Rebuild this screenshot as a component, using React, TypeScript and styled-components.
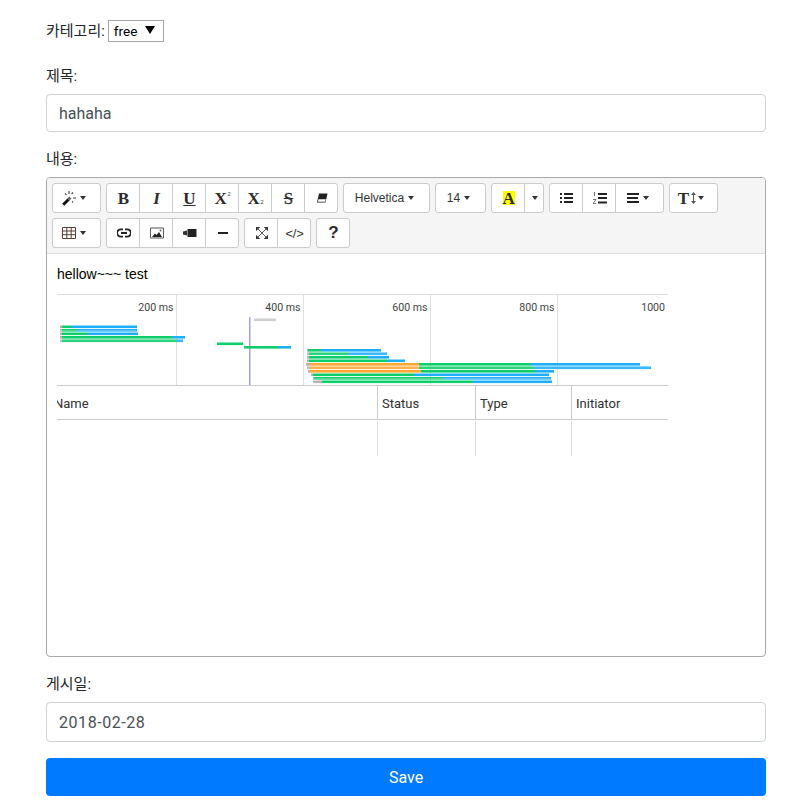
import styled, { createGlobalStyle } from "styled-components";

const GlobalStyle = createGlobalStyle`
  html, body { margin: 0; padding: 0; background: #fff; }
  body { font-family: Roboto, "Noto Sans CJK KR", sans-serif; color: #212529; }
`;

const Page = styled.div`
  width: 720px;
  padding: 20px 42px 6px 46px;
`;

const CategoryRow = styled.div`
  display: flex;
  align-items: center;
  gap: 3px;
  height: 22px;
  margin-bottom: 21px;
`;

const Label = styled.label`
  display: block;
  font-size: 15px;
  line-height: 24px;
  padding-top: 1px;
  margin-bottom: 6px;
`;

const InlineLabel = styled(Label)`
  margin: 0;
  padding: 0;
`;

const FakeSelect = styled.div`
  box-sizing: border-box;
  width: 56px;
  height: 22px;
  border: 1px solid #a6a6a6;
  display: flex;
  align-items: center;
  padding-left: 5px;
  gap: 8px;
  font-size: 13.5px;
  color: #000;
`;

const SelectArrow = styled.span`
  width: 0;
  height: 0;
  margin-top: -3px;
  border-left: 5px solid transparent;
  border-right: 5px solid transparent;
  border-top: 8px solid #000;
`;

const TextInput = styled.div<{ $height: number; $spaced?: boolean }>`
  box-sizing: border-box;
  height: ${(p) => p.$height}px;
  border: 1px solid #ced4da;
  border-radius: 4px;
  padding: 0 12px;
  display: flex;
  align-items: center;
  font-size: 16px;
  color: #495057;
  letter-spacing: ${(p) => (p.$spaced ? "0.55px" : "0")};
  margin-bottom: ${(p) => (p.$spaced ? 16 : 14)}px;
`;

const Editor = styled.div`
  box-sizing: border-box;
  height: 480px;
  border: 1px solid #a9a9a9;
  border-radius: 4px;
  margin-bottom: 14px;
  overflow: hidden;
`;

const Toolbar = styled.div`
  box-sizing: border-box;
  height: 76px;
  background: #f5f5f5;
  border-bottom: 1px solid #ddd;
  padding: 5px;
  display: flex;
  flex-direction: column;
  gap: 5px;
`;

const ToolRow = styled.div`
  display: flex;
  gap: 5px;
`;

const ToolGroup = styled.div`
  display: flex;
`;

const ToolButton = styled.div<{ $width?: number; $trail?: number; $gap?: number }>`
  box-sizing: border-box;
  width: ${(p) => p.$width ?? 34}px;
  height: 30px;
  margin-left: -1px;
  padding: 0 ${(p) => p.$trail ?? 0}px 0 1px;
  background: #fff;
  border: 1px solid #ccc;
  color: #333;
  display: flex;
  align-items: center;
  justify-content: center;
  gap: ${(p) => p.$gap ?? 4}px;
  font-family: "Liberation Sans", Arial, sans-serif;
  font-size: 12px;

  &:first-child {
    margin-left: 0;
    border-radius: 3px 0 0 3px;
  }
  &:last-child {
    border-radius: 0 3px 3px 0;
  }
  &:only-child {
    border-radius: 3px;
  }
`;

const Caret = styled.span`
  width: 0;
  height: 0;
  border-left: 3px solid transparent;
  border-right: 3px solid transparent;
  border-top: 4px solid #333;
`;

const SerifGlyph = styled.span<{ $italic?: boolean; $underline?: boolean }>`
  font-family: "Liberation Serif", serif;
  font-weight: bold;
  font-size: 17px;
  line-height: 1;
  font-style: ${(p) => (p.$italic ? "italic" : "normal")};
  text-decoration: ${(p) => (p.$underline ? "underline" : "none")};
  color: #2b2b2b;
`;

const Script = styled.span<{ $sub?: boolean }>`
  font-size: 5px;
  margin-left: 1px;
  align-self: ${(p) => (p.$sub ? "flex-end" : "flex-start")};
`;

const ScriptWrap = styled.span`
  display: inline-flex;
  height: 14px;
  align-items: center;
`;

const Strike = styled(SerifGlyph)`
  text-decoration: line-through;
  font-weight: normal;
  -webkit-text-stroke: 0.3px #2b2b2b;
`;

const ColorLetter = styled(SerifGlyph)`
  display: block;
  width: 12px;
  height: 14px;
  line-height: 15px;
  text-align: center;
  background: #ff0;
`;

const CodeGlyph = styled.span`
  font-size: 13px;
  letter-spacing: -0.2px;
`;

const HelpGlyph = styled.span`
  font-size: 17px;
  font-weight: bold;
  color: #2b2b2b;
`;

const Content = styled.div`
  padding: 10px;
  font-family: "Liberation Sans", Arial, sans-serif;
  font-size: 14px;
  color: #000;
`;

const ContentLine = styled.p`
  margin: 0 0 10px;
  line-height: 20px;
`;

const Chart = styled.svg`
  display: block;
`;

const SaveButton = styled.div`
  height: 38px;
  border-radius: 4px;
  background: #007bff;
  color: #fff;
  font-size: 16px;
  display: flex;
  align-items: center;
  justify-content: center;
`;

const GREEN = "#0cce6b";
const BLUE = "#1eaefb";
const ORANGE = "#ffa733";
const GREY = "#b4b4b4";

type Seg = [number, string];
type Bar = { y: number; x: number; segs: Seg[]; soft?: boolean };

const BARS: Bar[] = [
  { y: 325.5, x: 60, segs: [[62, GREY], [71, GREEN], [137, BLUE]] },
  { y: 329, x: 60, segs: [[62, GREY], [77, GREEN], [137, BLUE]], soft: true },
  { y: 332.5, x: 60, segs: [[62, GREY], [87, GREEN], [138, BLUE]] },
  { y: 336, x: 60, segs: [[62, GREY], [172, GREEN], [185, BLUE]] },
  { y: 339.5, x: 60, segs: [[62, GREY], [177, GREEN], [183, BLUE]], soft: true },
  { y: 342.5, x: 217, segs: [[243, GREEN]] },
  { y: 346, x: 244, segs: [[278, GREEN], [291, BLUE]] },
  { y: 318.5, x: 254, segs: [[276, "#cfcfcf"]] },
  { y: 349, x: 307, segs: [[308, GREY], [321, GREEN], [381, BLUE]] },
  { y: 352.5, x: 307, segs: [[309, GREY], [348, GREEN], [387, BLUE]], soft: true },
  { y: 356, x: 307, segs: [[309, GREY], [368, GREEN], [389, BLUE]] },
  { y: 359.5, x: 307, segs: [[309, GREY], [387, GREEN], [405, BLUE]] },
  { y: 363, x: 306, segs: [[310, GREY], [419, ORANGE], [530, GREEN], [640, BLUE]] },
  { y: 366.5, x: 307, segs: [[310, GREY], [419, ORANGE], [534, GREEN], [651, BLUE]], soft: true },
  { y: 370, x: 308, segs: [[310, GREY], [421, ORANGE], [535, GREEN], [554, BLUE]] },
  { y: 373.5, x: 311, segs: [[313, GREY], [414, GREEN], [549, BLUE]] },
  { y: 377, x: 313, segs: [[314, GREY], [443, GREEN], [551, BLUE]], soft: true },
  { y: 380.5, x: 313, segs: [[322, GREY], [473, GREEN], [552, BLUE]] },
];

const TICKS = [
  { x: 176.5, label: "200 ms" },
  { x: 303.5, label: "400 ms" },
  { x: 430.5, label: "600 ms" },
  { x: 557.5, label: "800 ms" },
];

const COLUMNS = [
  { x: 377.5, label: "Status" },
  { x: 475.5, label: "Type" },
  { x: 571.5, label: "Initiator" },
];

const NetworkChart = () => (
  <Chart width={611} height={162} viewBox="57 294 611 162" fontFamily="Roboto, sans-serif">
    <rect x="57" y="294" width="611" height="1" fill="#dcdcdc" />
    {TICKS.map((t) => (
      <g key={t.x}>
        <line x1={t.x} x2={t.x} y1="295" y2="385" stroke="#e0e0e0" />
        <text x={t.x - 3} y="311" textAnchor="end" fontSize="10.6" fill="#444">
          {t.label}
        </text>
      </g>
    ))}
    <text x="665" y="311" textAnchor="end" fontSize="10.6" fill="#444">
      1000
    </text>
    <rect x="249" y="317" width="1.5" height="68" fill="#a09ff0" />
    {BARS.map((b) => {
      let from = b.x;
      return (
        <g key={`${b.y}-${b.x}`}>
          {b.segs.map(([to, color]) => {
            const rect = <rect key={to} x={from} y={b.y} width={to - from} height="2.6" fill={color} />;
            from = to;
            return rect;
          })}
          {b.soft && <rect x={b.x} y={b.y + 1} width={from - b.x} height="1" fill="#fff" opacity="0.25" />}
        </g>
      );
    })}
    <rect x="57" y="385" width="611" height="1" fill="#ccc" />
    <rect x="57" y="419" width="611" height="1" fill="#ccc" />
    <text x="54" y="408" fontSize="13" fill="#303030">
      Name
    </text>
    {COLUMNS.map((c) => (
      <g key={c.x}>
        <line x1={c.x} x2={c.x} y1="386" y2="419" stroke="#ccc" />
        <line x1={c.x} x2={c.x} y1="421" y2="456" stroke="#e0e0e0" />
        <text x={c.x + 4.5} y="408" fontSize="13" fill="#303030">
          {c.label}
        </text>
      </g>
    ))}
  </Chart>
);

const Icon = styled.svg`
  display: block;
  flex: none;
`;

const WandIcon = () => (
  <Icon width="14" height="15" viewBox="0 0 14 15">
    <path d="M1.2 13.8 L6.5 8.5" stroke="#111" strokeWidth="3" />
    <path d="M6.2 8.8 L8.4 6.6" stroke="#666" strokeWidth="3" />
    <path d="M7 0v3M3 2.5l1.5 1.5M11 1.5L9.6 3M11 7h3M10 10.5l1 1" stroke="#444" strokeWidth="1.1" fill="none" />
  </Icon>
);

const EraserIcon = () => (
  <Icon width="12" height="10" viewBox="0 0 12 10">
    <path d="M3 .5h8.5L9.5 9.5H1z" fill="#222" />
    <path d="M2.4 6.3h7.4l-.7 2.4H2z" fill="#fff" />
  </Icon>
);

const TableIcon = () => (
  <Icon width="14" height="12" viewBox="0 0 14 12">
    <path d="M.5.5h13v11H.5zM.5 4h13M.5 7.7h13M4.8.5v11M9.2.5v11" fill="none" stroke="#5a3f38" />
  </Icon>
);

const LinkIcon = () => (
  <Icon width="14" height="10" viewBox="0 0 14 10">
    <path d="M6 1.3H3.8a3.7 3.7 0 0 0 0 7.4H6M8 1.3h2.2a3.7 3.7 0 0 1 0 7.4H8M4 5h6" fill="none" stroke="#222" strokeWidth="1.8" />
  </Icon>
);

const PictureIcon = () => (
  <Icon width="14" height="12" viewBox="0 0 14 12">
    <path d="M.5 1h13v10H.5z" fill="none" stroke="#555" />
    <path d="M2 10l3-3.5 1.5 1.5 2.5-3 3 5z" fill="#222" />
    <circle cx="10.5" cy="3.5" r="1" fill="#666" />
  </Icon>
);

const VideoIcon = () => (
  <Icon width="14" height="8" viewBox="0 0 14 8">
    <path d="M0 2.5l4-1v5l-4-1z" fill="#333" />
    <rect x="4.5" y="0" width="9" height="8" fill="#222" />
  </Icon>
);

const MinusIcon = () => (
  <Icon width="10" height="2" viewBox="0 0 10 2">
    <rect width="10" height="2" fill="#222" />
  </Icon>
);

const ExpandIcon = () => (
  <Icon width="12" height="12" viewBox="0 0 12 12">
    <path d="M0 0h4.2L0 4.2zM12 0v4.2L7.8 0zM0 12V7.8L4.2 12zM12 12H7.8L12 7.8z" fill="#333" />
    <path d="M1.5 1.5l9 9M10.5 1.5l-9 9" stroke="#555" strokeWidth="1" />
  </Icon>
);

const UlIcon = () => (
  <Icon width="13" height="10" viewBox="0 0 13 10">
    <path d="M0 0h2v2H0zM0 4h2v2H0zM0 8h2v2H0zM4 0h9v2H4zM4 4h9v2H4zM4 8h9v2H4z" fill="#222" />
  </Icon>
);

const OlIcon = () => (
  <Icon width="14" height="12" viewBox="0 0 14 12">
    <path d="M5 1h9v2H5zM5 5h9v2H5zM5 9.5h9v2H5z" fill="#222" />
    <path d="M1.5 0v4M0 7.5h3L0 11.5h3" fill="none" stroke="#555" strokeWidth="0.8" />
  </Icon>
);

const AlignIcon = () => (
  <Icon width="12" height="10" viewBox="0 0 12 10">
    <path d="M0 0h12v2H0zM0 4h11v2H0zM0 8h12v2H0z" fill="#222" />
  </Icon>
);

const ArrowsGlyph = () => (
  <Icon width="5" height="12" viewBox="0 0 5 12">
    <path d="M2.5 0L5 3H3v6h2l-2.5 3L0 9h2V3H0z" fill="#555" />
  </Icon>
);

const SuperScript = () => (
  <ScriptWrap>
    <SerifGlyph>X</SerifGlyph>
    <Script>2</Script>
  </ScriptWrap>
);

const SubScript = () => (
  <ScriptWrap>
    <SerifGlyph>X</SerifGlyph>
    <Script $sub>2</Script>
  </ScriptWrap>
);

const App = () => {
  return (
    <>
      <GlobalStyle />
      <Page>
        <CategoryRow>
          <InlineLabel>카테고리:</InlineLabel>
          <FakeSelect>
            free
            <SelectArrow />
          </FakeSelect>
        </CategoryRow>

        <Label>제목:</Label>
        <TextInput $height={38}>hahaha</TextInput>

        <Label>내용:</Label>
        <Editor>
          <Toolbar>
            <ToolRow>
              <ToolGroup>
                <ToolButton $width={49} $trail={6}>
                  <WandIcon />
                  <Caret />
                </ToolButton>
              </ToolGroup>
              <ToolGroup>
                <ToolButton><SerifGlyph>B</SerifGlyph></ToolButton>
                <ToolButton><SerifGlyph $italic>I</SerifGlyph></ToolButton>
                <ToolButton><SerifGlyph $underline>U</SerifGlyph></ToolButton>
                <ToolButton><SuperScript /></ToolButton>
                <ToolButton><SubScript /></ToolButton>
                <ToolButton><Strike>S</Strike></ToolButton>
                <ToolButton><EraserIcon /></ToolButton>
              </ToolGroup>
              <ToolGroup>
                <ToolButton $width={87} $trail={5}>
                  Helvetica
                  <Caret />
                </ToolButton>
              </ToolGroup>
              <ToolGroup>
                <ToolButton $width={51} $trail={5}>
                  14
                  <Caret />
                </ToolButton>
              </ToolGroup>
              <ToolGroup>
                <ToolButton><ColorLetter>A</ColorLetter></ToolButton>
                <ToolButton $width={20}><Caret /></ToolButton>
              </ToolGroup>
              <ToolGroup>
                <ToolButton><UlIcon /></ToolButton>
                <ToolButton><OlIcon /></ToolButton>
                <ToolButton $width={49} $trail={5}>
                  <AlignIcon />
                  <Caret />
                </ToolButton>
              </ToolGroup>
              <ToolGroup>
                <ToolButton $width={49} $trail={6} $gap={2}>
                  <SerifGlyph>T</SerifGlyph>
                  <ArrowsGlyph />
                  <Caret />
                </ToolButton>
              </ToolGroup>
            </ToolRow>
            <ToolRow>
              <ToolGroup>
                <ToolButton $width={49} $trail={6}>
                  <TableIcon />
                  <Caret />
                </ToolButton>
              </ToolGroup>
              <ToolGroup>
                <ToolButton><LinkIcon /></ToolButton>
                <ToolButton><PictureIcon /></ToolButton>
                <ToolButton><VideoIcon /></ToolButton>
                <ToolButton><MinusIcon /></ToolButton>
              </ToolGroup>
              <ToolGroup>
                <ToolButton><ExpandIcon /></ToolButton>
                <ToolButton><CodeGlyph>&lt;/&gt;</CodeGlyph></ToolButton>
              </ToolGroup>
              <ToolGroup>
                <ToolButton><HelpGlyph>?</HelpGlyph></ToolButton>
              </ToolGroup>
            </ToolRow>
          </Toolbar>
          <Content>
            <ContentLine>hellow~~~ test</ContentLine>
            <NetworkChart />
          </Content>
        </Editor>

        <Label>게시일:</Label>
        <TextInput $height={40} $spaced>2018-02-28</TextInput>

        <SaveButton>Save</SaveButton>
      </Page>
    </>
  );
};

export default App;
